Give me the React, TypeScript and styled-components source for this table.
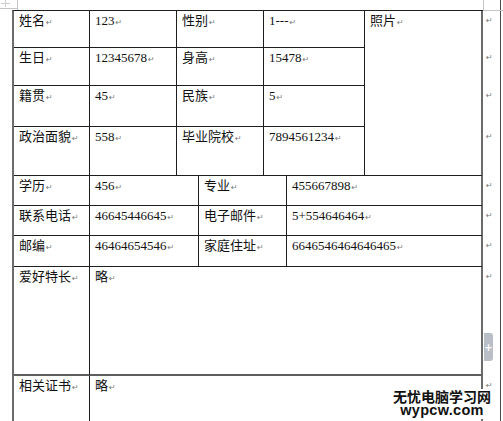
import React from "react";
import styled, { createGlobalStyle } from "styled-components";

const Global = createGlobalStyle`
  html, body { margin: 0; padding: 0; background: #fff; }
  body { font-family: "Liberation Serif", "Noto Sans CJK SC", serif; }
`;

const Page = styled.div`
  position: relative;
  width: 503px;
  height: 421px;
  overflow: hidden;
  background: #fff;
`;

const Sheet = styled.div`
  box-sizing: border-box;
  width: 501px;
  height: 421px;
  border-right: 1px solid #4a4a4a;
  padding: 10px 0 0 12px;
  display: flex;
  align-items: flex-start;
`;

const Table = styled.div`
  box-sizing: border-box;
  width: 471px;
  border-left: 2px solid #6b6b6b;
  border-top: 1px solid #1e1e1e;
  display: flex;
  flex-direction: column;
`;

const Section = styled.div<{ $cols: string; $rows: string }>`
  display: grid;
  grid-template-columns: ${(p) => p.$cols};
  grid-template-rows: ${(p) => p.$rows};
`;

const Cell = styled.div<{
  $last?: boolean;
  $rowSpan?: number;
  $colSpan?: number;
  $thick?: boolean;
  $open?: boolean;
}>`
  box-sizing: border-box;
  border-right: ${(p) => (p.$last ? "2px solid #6b6b6b" : "1px solid #1e1e1e")};
  border-bottom: ${(p) =>
    p.$open ? "none" : p.$thick ? "2px solid #5e5e5e" : "1px solid #1e1e1e"};
  padding: 1px 4px 0 5px;
  font-size: 13px;
  line-height: 17px;
  color: #111;
  white-space: nowrap;
  ${(p) => (p.$rowSpan ? `grid-row: span ${p.$rowSpan};` : "")}
  ${(p) => (p.$colSpan ? `grid-column: span ${p.$colSpan};` : "")}
`;

const Pilcrow = styled.span`
  font-family: "DejaVu Sans", sans-serif;
  font-size: 8px;
  color: #7a7a7a;
  margin-left: 1px;
`;

const Marks = styled.div`
  display: flex;
  flex-direction: column;
  padding-top: 1px;
  width: 16px;
`;

const MarkSlot = styled.div<{ $h: number }>`
  box-sizing: border-box;
  height: ${(p) => p.$h}px;
  padding: 2px 0 0 2px;
  line-height: 10px;
`;

const CornerMark = styled.svg<{ $right?: boolean }>`
  position: absolute;
  top: 0;
  ${(p) => (p.$right ? "right: 0;" : "left: 0;")}
`;

const InsertTab = styled.div`
  position: absolute;
  left: 484px;
  top: 333px;
  width: 9px;
  height: 28px;
  background: #b9bec7;
  border-radius: 0 3px 3px 0;
  display: flex;
  align-items: center;
  justify-content: center;
  color: #fff;
  font-family: "DejaVu Sans", sans-serif;
  font-weight: bold;
  font-size: 10px;
`;

const Watermark = styled.div`
  position: absolute;
  left: 389px;
  top: 389px;
  padding: 0 4px 1px 4px;
  background: #fff;
  display: flex;
  flex-direction: column;
  align-items: center;
  color: #111;
`;

const WmCn = styled.div`
  font-family: "Noto Sans CJK SC", sans-serif;
  font-weight: 700;
  font-size: 14px;
  line-height: 14px;
`;

const WmEn = styled.div`
  font-family: "Liberation Sans", sans-serif;
  font-weight: 700;
  font-size: 14.5px;
  line-height: 15px;
  letter-spacing: 0.3px;
`;

type C = { t: string; last?: boolean; rowSpan?: number; colSpan?: number; thick?: boolean; open?: boolean };

const topRowsH = [37, 38, 41, 49];
const bottomRowsH = [30, 30, 31, 109, 60];

const topCells: C[] = [
  { t: "姓名" }, { t: "123" }, { t: "性别" }, { t: "1---" }, { t: "照片", last: true, rowSpan: 4 },
  { t: "生日" }, { t: "12345678" }, { t: "身高" }, { t: "15478" },
  { t: "籍贯" }, { t: "45" }, { t: "民族" }, { t: "5" },
  { t: "政治面貌" }, { t: "558" }, { t: "毕业院校" }, { t: "7894561234" },
];

const bottomCells: C[] = [
  { t: "学历" }, { t: "456" }, { t: "专业" }, { t: "455667898", last: true },
  { t: "联系电话" }, { t: "46645446645" }, { t: "电子邮件" }, { t: "5+554646464", last: true },
  { t: "邮编" }, { t: "46464654546" }, { t: "家庭住址" }, { t: "6646546464646465", last: true },
  { t: "爱好特长", thick: true }, { t: "略", colSpan: 3, last: true, thick: true },
  { t: "相关证书", open: true }, { t: "略", colSpan: 3, last: true, open: true },
];

const renderCells = (cells: C[]) =>
  cells.map((c, i) => (
    <Cell
      key={i}
      $last={c.last}
      $rowSpan={c.rowSpan}
      $colSpan={c.colSpan}
      $thick={c.thick}
      $open={c.open}
    >
      {c.t}
      <Pilcrow>↵</Pilcrow>
    </Cell>
  ));

export default function App() {
  return (
    <>
      <Global />
      <Page>
        <Sheet>
          <Table>
            <Section $cols="76px 87px 87px 101px 118px" $rows={topRowsH.map((h) => h + "px").join(" ")}>
              {renderCells(topCells)}
            </Section>
            <Section $cols="76px 109px 88px 196px" $rows={bottomRowsH.map((h) => h + "px").join(" ")}>
              {renderCells(bottomCells)}
            </Section>
          </Table>
          <Marks>
            {[...topRowsH, ...bottomRowsH].map((h, i) => (
              <MarkSlot key={i} $h={h}>
                <Pilcrow>↵</Pilcrow>
              </MarkSlot>
            ))}
          </Marks>
        </Sheet>
        <CornerMark width="20" height="11" viewBox="0 0 20 11">
          <path d="M5.5 0V7M1 3.5H10" stroke="#cfcfcf" strokeWidth="1" fill="none" />
          <path d="M17.5 0V10M0 8.5H17" stroke="#c4c4c4" strokeWidth="1" fill="none" />
        </CornerMark>
        <CornerMark $right width="20" height="11" viewBox="0 0 20 11">
          <path d="M0.5 0V11M0 10.5H20" stroke="#c4c4c4" strokeWidth="1" fill="none" />
        </CornerMark>
        <InsertTab>+</InsertTab>
        <Watermark>
          <WmCn>无忧电脑学习网</WmCn>
          <WmEn>wypcw.com</WmEn>
        </Watermark>
      </Page>
    </>
  );
}
